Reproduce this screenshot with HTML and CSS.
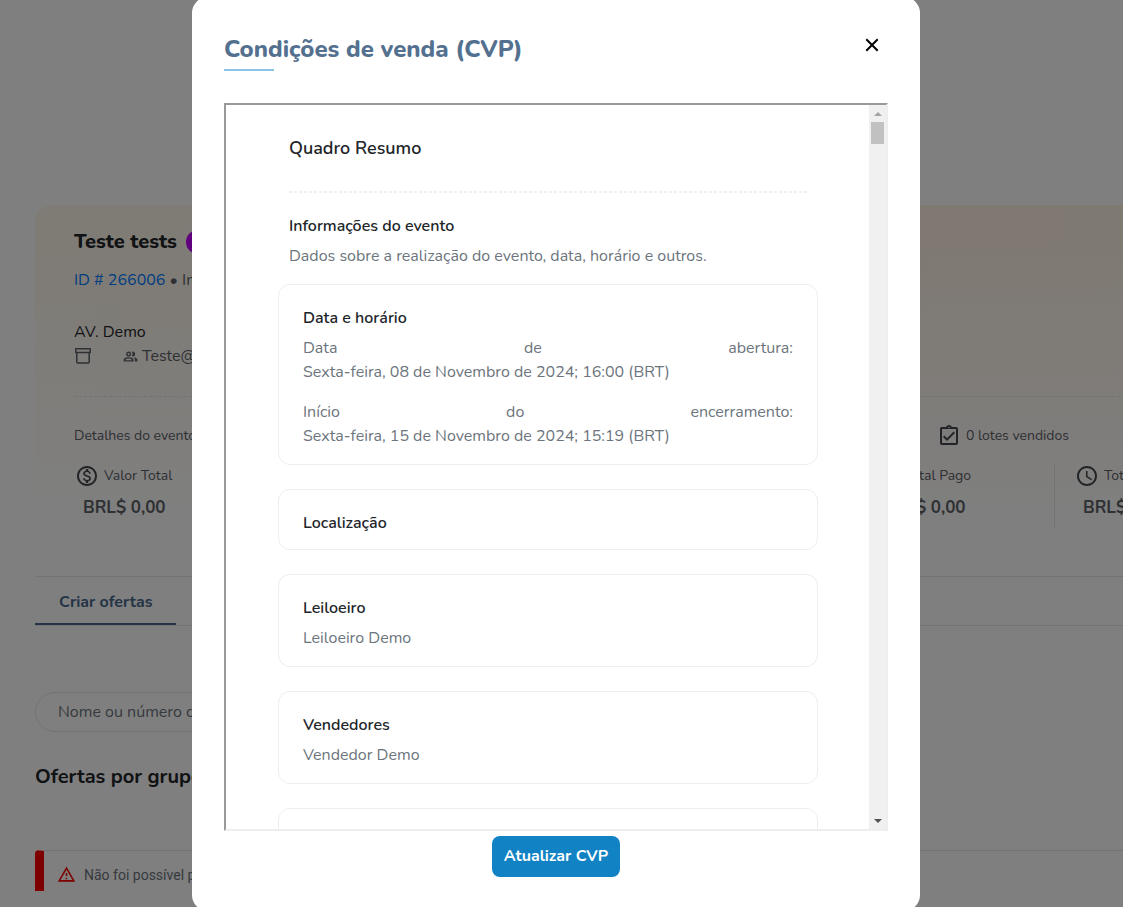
FILE: index.html
```html
<!DOCTYPE html>
<html lang="pt-BR">
<head>
<meta charset="utf-8">
<title>Teste tests</title>
<link rel="stylesheet" href="styles.css">
</head>
<body>
<main class="page">
  <section class="event">
    <h1 class="event-title">Teste tests <span class="badge"></span></h1>
    <p class="event-id"><a href="#">ID # 266006</a> • Início</p>
    <p class="event-place">AV. Demo</p>
    <div class="event-meta">
      <svg class="icon-archive" viewBox="0 0 18 18" fill="none" stroke="currentColor" stroke-width="1.500" stroke-linejoin="round"><path d="M1.800 1.800h14.400v3.700H1.800zM2.800 5.500v9.500q0 1 1 1h10.400q1 0 1-1V5.500"/></svg>
      <span class="contact"><svg class="icon-people" viewBox="0 0 24 24" fill="currentColor"><path fill-rule="evenodd" d="M9 4a4 4 0 1 1 0 8 4 4 0 0 1 0-8zm0 2.200a1.800 1.800 0 1 0 0 3.600 1.800 1.800 0 0 0 0-3.600zM1 20v-3c0-2.700 5-4 8-4s8 1.300 8 4v3zm2.400-2.200h11.200c-.600-1.500-3.500-2.500-5.600-2.500s-5 1-5.600 2.500z"/><path d="M14 4.300a4 4 0 1 1 0 7.400c1.600-2.200 1.600-5.200 0-7.400zM17 13.200c3 .400 6 1.600 6 3.800v3h-4v-3c0-1.600-.800-2.800-2-3.800z"/></svg>Teste@demo</span>
    </div>
    <div class="details">
      <span>Detalhes do evento</span>
      <span class="sold"><svg class="icon" viewBox="0 0 24 24" fill="currentColor"><path d="M18 9l-1.410-1.420L10 14.170l-2.590-2.580L6 13l4 4zm1-6h-4.180C14.400 1.840 13.300 1 12 1s-2.400.840-2.820 2H5c-.140 0-.270.010-.400.040-.780.160-1.430.710-1.600 1.600V19c0 1.100.900 2 2 2h14c1.100 0 2-.900 2-2V5c0-1.100-.900-2-2-2zm-7-.250c.410 0 .750.340.750.750s-.340.750-.750.750-.750-.340-.750-.750.340-.750.750-.750zM19 19H5V5h14v14z"/></svg>0 lotes vendidos</span>
    </div>
    <ul class="metrics">
      <li class="metric"><span class="metric-name"><svg class="icon" viewBox="0 0 24 24" fill="currentColor"><path d="M12 2C6.480 2 2 6.480 2 12s4.480 10 10 10 10-4.480 10-10S17.520 2 12 2zm0 18c-4.410 0-8-3.590-8-8s3.590-8 8-8 8 3.590 8 8-3.590 8-8 8zm.310-8.860c-1.770-.450-2.340-.940-2.340-1.670 0-.840.790-1.430 2.100-1.430 1.380 0 1.900.660 1.940 1.640h1.710c-.050-1.340-.870-2.570-2.490-2.970V5H10.900v1.690c-1.510.320-2.720 1.300-2.720 2.810 0 1.790 1.490 2.690 3.660 3.210 1.950.460 2.340 1.150 2.340 1.870 0 .530-.390 1.390-2.100 1.390-1.600 0-2.230-.720-2.320-1.640H8.040c.100 1.700 1.360 2.660 2.860 2.970V19h2.340v-1.670c1.520-.290 2.720-1.160 2.730-2.770-.010-2.200-1.900-2.960-3.660-3.420z"/></svg>Valor Total</span><strong>BRL$ 0,00</strong></li>
      <li class="metric"></li>
      <li class="metric"></li>
      <li class="metric"></li>
      <li class="metric"><span class="metric-name"><svg class="icon" viewBox="0 0 24 24"></svg>Total Pago</span><strong>BRL$ 0,00</strong></li>
      <li class="metric"><span class="metric-name"><svg class="icon" viewBox="0 0 24 24" fill="currentColor"><path d="M11.990 2C6.470 2 2 6.480 2 12s4.470 10 9.990 10C17.520 22 22 17.520 22 12S17.520 2 11.990 2zM12 20c-4.420 0-8-3.580-8-8s3.580-8 8-8 8 3.580 8 8-3.580 8-8 8zm.500-13H11v6l5.250 3.150.750-1.230-4.500-2.670z"/></svg>Total</span><strong>BRL$ 0,00</strong></li>
    </ul>
  </section>
  <nav class="tabs"><a class="tab" href="#">Criar ofertas</a></nav>
  <input class="search" type="search" aria-label="Buscar oferta" placeholder="Nome ou número do lote">
  <h2 class="group-title">Ofertas por grupo</h2>
  <div class="alert"><svg class="icon-warning" viewBox="0 0 24 24" fill="currentColor"><path d="M12 5.990L19.530 19H4.470L12 5.990M12 2L1 21h22L12 2zm1 14h-2v2h2v-2zm0-6h-2v4h2v-4z"/></svg>Não foi possível processar</div>
</main>

<div class="overlay">
  <div class="dialog" role="dialog" aria-modal="true" aria-labelledby="dialog-title">
    <header class="dialog-head">
      <h2 class="dialog-title" id="dialog-title">Condições de venda (CVP)</h2>
      <button class="close" type="button" aria-label="Fechar"><svg viewBox="0 0 14 14" fill="none" stroke="currentColor" stroke-width="2"><path d="M1.300 1.300l11.400 11.400M12.700 1.300L1.300 12.700"/></svg></button>
    </header>
    <div class="frame">
      <div class="document">
        <h3 class="doc-title">Quadro Resumo</h3>
        <div class="intro">
          <h4>Informações do evento</h4>
          <p>Dados sobre a realização do evento, data, horário e outros.</p>
        </div>
        <section class="card">
          <h4>Data e horário</h4>
          <p><span class="spread">Data de abertura:</span>Sexta-feira, 08 de Novembro de 2024; 16:00 (BRT)</p>
          <p class="next"><span class="spread">Início do encerramento:</span>Sexta-feira, 15 de Novembro de 2024; 15:19 (BRT)</p>
        </section>
        <section class="card"><h4>Localização</h4></section>
        <section class="card"><h4>Leiloeiro</h4><p>Leiloeiro Demo</p></section>
        <section class="card"><h4>Vendedores</h4><p>Vendedor Demo</p></section>
        <section class="card"></section>
      </div>
      <div class="scrollbar" aria-hidden="true">
        <span class="arrow up"></span><span class="thumb"></span><span class="arrow down"></span>
      </div>
    </div>
    <button class="primary" type="button">Atualizar CVP</button>
  </div>
</div>
</body>
</html>
```
FILE: styles.css
```css
* { box-sizing: border-box; }
body {
  margin: 0;
  height: 100vh;
  overflow: hidden;
  background: #fff;
  color: #6c757d;
  font: 16px/24px Nunito, "Nunito Sans", Lato, sans-serif;
}
h1, h2, h3, h4, p, ul { margin: 0; padding: 0; }
a { color: #007bff; text-decoration: none; }
button, input { font: inherit; }

.page { min-width: 1300px; padding: 205px 0 0 35px; }
.event {
  height: 371px;
  padding: 25px 0 0 39px;
  border-radius: 16px 0 0 0;
  background:
    linear-gradient(to bottom, transparent 10%, #fff 85%),
    linear-gradient(to right, #fef8ec, #fef2e4 60%, #fef4e6);
  color: #5c6168;
}
.event-title { display: flex; align-items: center; gap: 9px; font-size: 20px; font-weight: 800; color: #212529; }
.badge { width: 24px; height: 24px; border-radius: 12px; background: #c000ff; }
.event-id { margin-top: 14px; }
.event-place { margin-top: 28px; color: #212529; }
.event-meta { display: flex; align-items: center; gap: 31px; padding-bottom: 28px; border-bottom: 1px dashed #e6e6e2; }
.icon-archive { width: 18px; height: 18px; }
.contact { display: flex; align-items: center; gap: 4px; }
.icon-people { width: 15px; height: 15px; }
.icon { width: 24px; height: 24px; color: #44464c; }
.details { display: grid; grid-template-columns: 863px 1fr; margin-top: 27px; font-size: 14px; }
.sold, .metric-name { display: flex; align-items: center; gap: 5px; }
.metrics { display: flex; margin: 16px 0 0 -19px; list-style: none; font-size: 14px; }
.metric { width: 200px; height: 65px; padding-left: 20px; border-right: 1px solid #e6e6e6; }
.metric strong { display: block; margin: 8px 0 0 8px; font-size: 17px; color: #5c6168; }

.tabs { display: flex; border: 1px solid #e6e6e6; border-width: 1px 0; }
.tab { padding: 13px 24px 9px; border-bottom: 2px solid #48698c; color: #48698c; font-weight: 700; }
.search {
  display: block;
  width: 400px;
  height: 40px;
  margin-top: 66px;
  padding: 0 22px;
  border: 1px solid #e6e6e6;
  border-radius: 20px;
  background: transparent;
}
.search::placeholder { color: #6c757d; }
.group-title { margin-top: 33px; font-size: 20px; color: #212529; }
.alert {
  display: flex;
  align-items: center;
  gap: 8px;
  height: 41px;
  margin-top: 61px;
  padding: 7px 0 0 13px;
  border-top: 1px solid #e6e6e6;
  border-left: 9px solid #f00;
  border-radius: 4px 0 0 0;
  font: 14px/24px Roboto, sans-serif;
}
.icon-warning { width: 19px; height: 19px; color: #f00; }

.overlay {
  position: fixed;
  inset: 0;
  display: flex;
  align-items: center;
  justify-content: center;
  padding-right: 11px;
  overflow: hidden;
  background: rgba(0, 0, 0, .5);
}
.dialog {
  display: flex;
  flex: none;
  flex-direction: column;
  width: 728px;
  max-width: 100%;
  padding: 36px 32px 34px;
  border-radius: 16px;
  background: #fff;
}
.dialog-head { display: flex; align-items: flex-start; justify-content: space-between; margin-bottom: 32px; }
.dialog-title { font-size: 24px; font-weight: 800; line-height: 32px; color: #54708f; }
.dialog-title::after { content: ""; display: block; width: 50px; height: 2px; margin-top: 4px; background: #8cc4e6; }
.close { display: flex; margin: 5px 9px 0 0; padding: 0; border: 0; background: none; color: #000; }
.close svg { width: 14px; height: 14px; }
.frame {
  display: flex;
  height: 728px;
  overflow: hidden;
  border: 2px solid;
  border-color: #999 #eee #eee #999;
}
.document { flex: 1; padding: 31px 51px 0 52px; overflow: hidden; }
.doc-title {
  margin: 0 11px;
  padding-bottom: 33px;
  background: repeating-linear-gradient(to right, #f0f0f0 0 3px, transparent 3px 5px) bottom / 100% 2px no-repeat;
  font-size: 18px;
  font-weight: 600;
  color: #212529;
}
.intro { margin: 21px 11px 16px; }
h4 { color: #212529; font-size: 16px; font-weight: 600; }
h4 + p { margin-top: 6px; }
.card { min-height: 61px; margin-bottom: 24px; padding: 21px 24px 16px; border: 1px solid #eee; border-radius: 12px; }
.card h4:last-child { margin-bottom: -2px; }
.next { margin-top: 16px; }
.spread { display: block; text-align-last: justify; }
.scrollbar { display: flex; flex-direction: column; align-items: center; width: 17px; padding: 7px 0 6px; background: #f0f0f0; }
.arrow { border: 4px solid transparent; }
.up { border-top: 0; border-bottom-color: #a3a3a3; }
.down { margin-top: auto; border-bottom: 0; border-top-color: #505050; }
.thumb { width: 13px; height: 22px; margin-top: 6px; background: #c1c1c1; }
.primary {
  align-self: center;
  height: 41px;
  margin-top: 5px;
  padding: 0 12px;
  border: 0;
  border-radius: 8px;
  background: #1183c5;
  color: #fff;
  font-weight: 700;
}
```
